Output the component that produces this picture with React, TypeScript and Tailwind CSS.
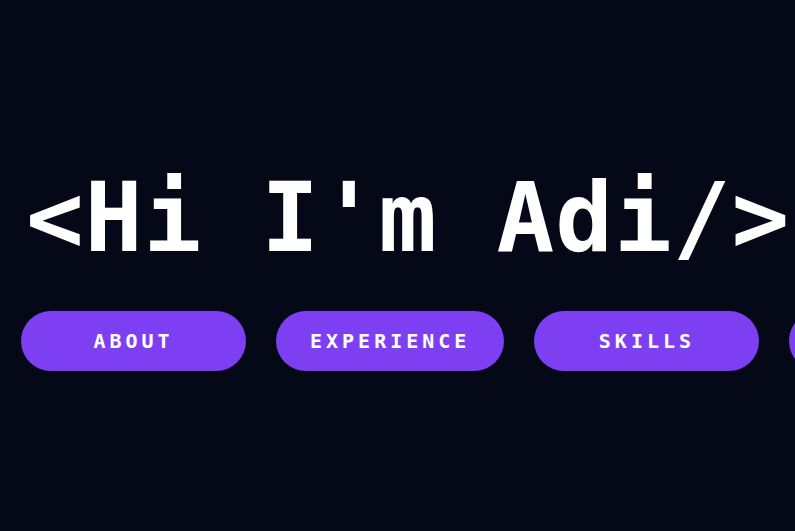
const links = ["About", "Experience", "Skills", "Projects", "Contact"];

export default function App() {
  return (
    <main className="flex h-screen w-full flex-col justify-center overflow-hidden bg-[#050816] px-[21px] font-['DejaVu_Sans_Mono',monospace]">
      <h1 className="ml-[5px] whitespace-nowrap text-[96px] font-bold leading-[116px] tracking-[1px] text-white">
        &lt;Hi I'm Adi/&gt;
      </h1>
      <nav className="mt-[35px] flex gap-[30px]">
        {links.map((link) => (
          <button
            key={link}
            className="h-[60px] min-w-[225px] shrink-0 rounded-full bg-[#7e3ff3] px-[34px] text-[20px] font-bold uppercase tracking-[4px] text-white"
          >
            {link}
          </button>
        ))}
      </nav>
    </main>
  );
}
